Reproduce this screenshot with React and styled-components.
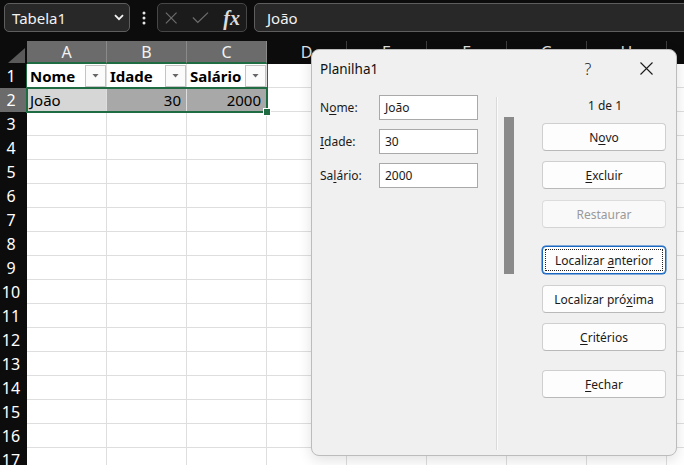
import styled, { createGlobalStyle } from "styled-components";

const GlobalStyle = createGlobalStyle`
  html, body {
    margin: 0;
    padding: 0;
    background: #ffffff;
    overflow: hidden;
  }
  body {
    font-family: "Noto Sans", "Open Sans", sans-serif;
  }
  * {
    box-sizing: border-box;
  }
`;

const Screen = styled.div`
  position: relative;
  width: 684px;
  height: 465px;
  overflow: hidden;
  background: #ffffff;
`;

/* ---------- formula bar ---------- */

const TopBar = styled.div`
  display: flex;
  align-items: flex-start;
  height: 41px;
  padding: 3px 0 0 4px;
  background: #0c0c0c;
`;

const NameBox = styled.div`
  display: flex;
  align-items: center;
  justify-content: space-between;
  width: 126px;
  height: 29px;
  padding: 0 5px 0 7px;
  border: 1px solid #5e5e5e;
  border-radius: 5px;
  background: #282828;
  color: #f2f2f2;
  font-size: 15px;
`;

const Dots = styled.div`
  display: flex;
  align-items: center;
  justify-content: center;
  width: 27px;
  height: 29px;
`;

const FxBox = styled.div`
  display: flex;
  align-items: center;
  gap: 15px;
  width: 90px;
  height: 29px;
  padding: 0 6px 0 7px;
  border: 1px solid #474747;
  border-radius: 5px;
  background: #1b1b1b;
`;

const Fx = styled.span`
  margin-left: -1px;
  color: #dcdcdc;
  font-family: "Liberation Serif", "DejaVu Serif", serif;
  font-style: italic;
  font-weight: bold;
  font-size: 20px;
  line-height: 1;
`;

const FormulaInput = styled.div`
  display: flex;
  align-items: center;
  flex: 1;
  height: 29px;
  margin: 0 -10px 0 7px;
  padding-left: 12px;
  border: 1px solid #5e5e5e;
  border-radius: 5px;
  background: #282828;
  color: #f2f2f2;
  font-size: 15px;
`;

/* ---------- sheet ---------- */

const Sheet = styled.div`
  position: relative;
  display: grid;
  grid-template-columns: 27px repeat(9, 80px);
  grid-template-rows: 23px;
  grid-auto-rows: 24px;
  font-size: 15px;
`;

const Corner = styled.div`
  position: relative;
  background: #0c0c0c;

  &::after {
    content: "";
    position: absolute;
    right: 2px;
    bottom: 1px;
    width: 17px;
    height: 15px;
    background: #5a5a5a;
    clip-path: polygon(100% 0, 100% 100%, 0 100%);
  }
`;

const ColHead = styled.div`
  display: flex;
  align-items: center;
  justify-content: center;
  background: ${(p) => (p.$selected ? "#6b6b6b" : "#0c0c0c")};
  color: ${(p) => (p.$selected ? "#f2f2f2" : "#dedede")};
  border-right: 1px solid ${(p) => (p.$selected ? "#8a8a8a" : "#3e3e3e")};
  border-bottom: 2px solid ${(p) => (p.$selected ? "#1f6b42" : "#0c0c0c")};
  font-size: 16px;
`;

const RowHead = styled.div`
  display: flex;
  align-items: center;
  justify-content: center;
  padding-right: 5px;
  background: ${(p) => (p.$selected ? "#6b6b6b" : "#0c0c0c")};
  color: #ffffff;
  border-bottom: 1px solid ${(p) => (p.$selected ? "#6b6b6b" : "#0c0c0c")};
  font-size: 16px;
`;

const Cell = styled.div`
  display: flex;
  align-items: center;
  justify-content: ${(p) => (p.$right ? "flex-end" : "space-between")};
  padding: ${(p) => (p.$right ? "0 5px 0 0" : "0 0 0 3px")};
  background: ${(p) => p.$fill || "#ffffff"};
  border-right: 1px solid #dedede;
  border-bottom: 1px solid #dedede;
  color: #000000;
  font-weight: ${(p) => (p.$bold ? 700 : 400)};
  white-space: nowrap;
`;

const FilterButton = styled.div`
  display: flex;
  align-items: center;
  justify-content: center;
  width: 21px;
  height: 22px;
  border: 1px solid #c4c4c4;
  background: #fbfbfb;

  &::before {
    content: "";
    width: 7px;
    height: 4px;
    background: #666666;
    clip-path: polygon(0 0, 100% 0, 50% 100%);
  }
`;

const TableFrame = styled.div`
  position: absolute;
  left: 26px;
  top: 23px;
  width: 242px;
  height: 25px;
  border-left: 1px solid #1f6b42;
  border-right: 1px solid #1f6b42;
  pointer-events: none;
`;

const Selection = styled.div`
  position: absolute;
  left: 26px;
  top: 46px;
  width: 242px;
  height: 26px;
  border: 2px solid #1f6b42;
  pointer-events: none;

  &::after {
    content: "";
    position: absolute;
    right: -5px;
    bottom: -5px;
    width: 6px;
    height: 6px;
    background: #1f6b42;
    border: 1px solid #ffffff;
  }
`;

/* ---------- data form dialog ---------- */

const Dialog = styled.div`
  position: absolute;
  left: 311px;
  top: 49px;
  width: 366px;
  height: 407px;
  display: flex;
  flex-direction: column;
  background: #f0f0f0;
  border: 1px solid #bcbcbc;
  border-radius: 8px;
  box-shadow: 0 4px 14px rgba(0, 0, 0, 0.12);
  font-size: 12px;
  color: #1a1a1a;
`;

const TitleBar = styled.div`
  display: flex;
  align-items: center;
  height: 39px;
  padding: 0 0 2px 8px;
`;

const Title = styled.div`
  flex: 1;
  font-size: 13.5px;
  color: #111111;
`;

const TitleButton = styled.div`
  display: flex;
  align-items: center;
  justify-content: center;
  width: ${(p) => p.$w}px;
  height: 30px;
  color: #1a1a1a;
  font-size: 16px;
  font-weight: 300;
`;

const Body = styled.div`
  display: flex;
  flex: 1;
  padding-bottom: 5px;
`;

const Fields = styled.div`
  display: flex;
  flex-direction: column;
  gap: 9px;
  width: 184px;
  padding: 6px 0 0 8px;
`;

const FieldRow = styled.div`
  display: flex;
  align-items: center;
  height: 25px;
`;

const Label = styled.div`
  width: 59px;
`;

const Input = styled.div`
  display: flex;
  align-items: center;
  width: 99px;
  height: 25px;
  padding-left: 5px;
  background: #ffffff;
  border: 1px solid #a9a9a9;
`;

const Divider = styled.div`
  width: 2px;
  margin-top: 8px;
  border-left: 1px solid #dadada;
  border-right: 1px solid #fbfbfb;
`;

const ScrollArea = styled.div`
  width: 44px;
  padding: 28px 0 0 6px;
`;

const ScrollThumb = styled.div`
  width: 10px;
  height: 157px;
  background: #8a8a8a;
`;

const Actions = styled.div`
  display: flex;
  flex-direction: column;
  width: 124px;
  padding-top: 9px;
`;

const Counter = styled.div`
  height: 16px;
  line-height: 16px;
  text-align: center;
  margin-left: 2px;
`;

const Button = styled.div`
  display: flex;
  align-items: center;
  justify-content: center;
  height: 28px;
  margin-top: ${(p) => p.$mt}px;
  background: ${(p) => (p.$disabled ? "#f9f9f9" : "#fdfdfd")};
  border: 1px solid ${(p) => (p.$focused ? "#1967c0" : p.$disabled ? "#dcdcdc" : "#cfcfcf")};
  border-bottom-color: ${(p) => (p.$focused ? "#1967c0" : p.$disabled ? "#d4d4d4" : "#b9b9b9")};
  border-radius: 4px;
  color: ${(p) => (p.$disabled ? "#9a9a9a" : "#1a1a1a")};
  outline: ${(p) => (p.$focused ? "1px dotted #222" : "none")};
  outline-offset: -4px;
  box-shadow: ${(p) => (p.$focused ? "0 0 0 0.5px #1967c0" : "none")};
`;

const Key = styled.u`
  text-underline-offset: 2px;
`;

function CloseIcon() {
  return (
    <svg width="13" height="13" viewBox="0 0 13 13">
      <path d="M0.5 0.5 L12.5 12.5 M12.5 0.5 L0.5 12.5" stroke="#1a1a1a" strokeWidth="1.1" />
    </svg>
  );
}

function Chevron() {
  return (
    <svg width="10" height="7" viewBox="0 0 10 7">
      <path d="M1 1.2 L5 5.2 L9 1.2" fill="none" stroke="#f2f2f2" strokeWidth="1.8" />
    </svg>
  );
}

function MoreDots() {
  return (
    <svg width="4" height="14" viewBox="0 0 4 14">
      <circle cx="2" cy="2" r="1.5" fill="#e6e6e6" />
      <circle cx="2" cy="7" r="1.5" fill="#e6e6e6" />
      <circle cx="2" cy="12" r="1.5" fill="#e6e6e6" />
    </svg>
  );
}

const columns = ["A", "B", "C", "D", "E", "F", "G", "H", "I"];
const rowCount = 17;

function SheetRow({ n }) {
  if (n === 1) {
    return (
      <>
        <RowHead>{n}</RowHead>
        <Cell $bold>
          Nome
          <FilterButton />
        </Cell>
        <Cell $bold>
          Idade
          <FilterButton />
        </Cell>
        <Cell $bold>
          Salário
          <FilterButton />
        </Cell>
        {columns.slice(3).map((c) => (
          <Cell key={c} />
        ))}
      </>
    );
  }
  if (n === 2) {
    return (
      <>
        <RowHead $selected>{n}</RowHead>
        <Cell $fill="#d6d6d6">João</Cell>
        <Cell $fill="#a8a8a8" $right>
          30
        </Cell>
        <Cell $fill="#a8a8a8" $right>
          2000
        </Cell>
        {columns.slice(3).map((c) => (
          <Cell key={c} />
        ))}
      </>
    );
  }
  return (
    <>
      <RowHead>{n}</RowHead>
      {columns.map((c) => (
        <Cell key={c} />
      ))}
    </>
  );
}

export default function App() {
  return (
    <Screen>
      <GlobalStyle />
      <TopBar>
        <NameBox>
          Tabela1
          <Chevron />
        </NameBox>
        <Dots>
          <MoreDots />
        </Dots>
        <FxBox>
          <svg width="14" height="14" viewBox="0 0 14 14">
            <path d="M1 1 L13 13 M13 1 L1 13" stroke="#6e6e6e" strokeWidth="1.3" />
          </svg>
          <svg width="19" height="13" viewBox="0 0 19 13">
            <path d="M1 6.5 L6.5 12 L18 1" fill="none" stroke="#6e6e6e" strokeWidth="1.3" />
          </svg>
          <Fx>fx</Fx>
        </FxBox>
        <FormulaInput>João</FormulaInput>
      </TopBar>

      <Sheet>
        <Corner />
        {columns.map((c, i) => (
          <ColHead key={c} $selected={i < 3}>
            {c}
          </ColHead>
        ))}
        {Array.from({ length: rowCount }, (_, i) => (
          <SheetRow key={i} n={i + 1} />
        ))}
        <TableFrame />
        <Selection />
      </Sheet>

      <Dialog>
        <TitleBar>
          <Title>Planilha1</Title>
          <TitleButton $w={56}>?</TitleButton>
          <TitleButton $w={60}>
            <CloseIcon />
          </TitleButton>
        </TitleBar>
        <Body>
          <Fields>
            <FieldRow>
              <Label>
                N<Key>o</Key>me:
              </Label>
              <Input>João</Input>
            </FieldRow>
            <FieldRow>
              <Label>
                <Key>I</Key>dade:
              </Label>
              <Input>30</Input>
            </FieldRow>
            <FieldRow>
              <Label>
                Sa<Key>l</Key>ário:
              </Label>
              <Input>2000</Input>
            </FieldRow>
          </Fields>
          <Divider />
          <ScrollArea>
            <ScrollThumb />
          </ScrollArea>
          <Actions>
            <Counter>1 de 1</Counter>
            <Button $mt={9}>
              N<Key>o</Key>vo
            </Button>
            <Button $mt={10}>
              <Key>E</Key>xcluir
            </Button>
            <Button $mt={11} $disabled>
              Restaurar
            </Button>
            <Button $mt={18} $focused>
              Localizar&nbsp;<Key>a</Key>nterior
            </Button>
            <Button $mt={11}>
              Localizar pró<Key>x</Key>ima
            </Button>
            <Button $mt={10}>
              <Key>C</Key>ritérios
            </Button>
            <Button $mt={19}>
              <Key>F</Key>echar
            </Button>
          </Actions>
        </Body>
      </Dialog>
    </Screen>
  );
}
